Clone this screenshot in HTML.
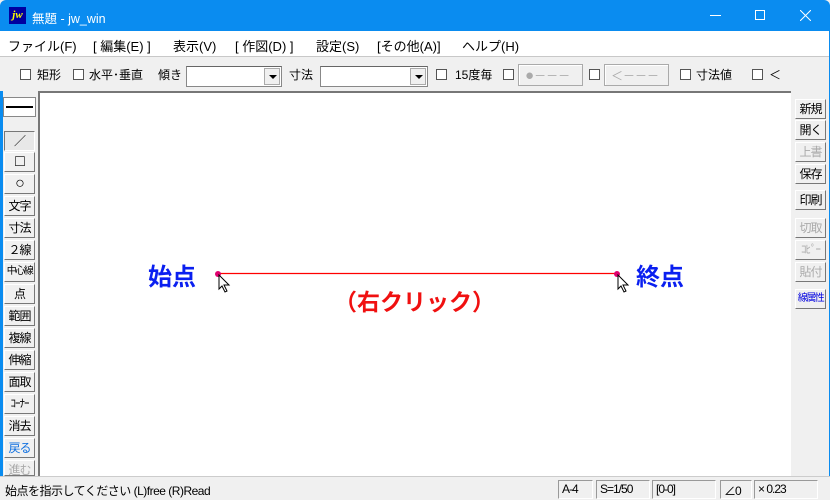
<!DOCTYPE html>
<html><head><meta charset="utf-8"><style>
*{margin:0;padding:0;box-sizing:border-box}
body{width:830px;height:500px;overflow:hidden;background:#f0f0f0;font-family:"Liberation Sans","Noto Sans CJK JP",sans-serif;position:relative;font-size:12px;color:#000}
.a{position:absolute}
#title{left:0;top:0;width:830px;height:31px;background:#0a8cf0;color:#fff;border-radius:6px 6px 0 0}
#menu{left:0;top:31px;width:830px;height:26px;background:#fff;border-bottom:1px solid #c8c8c8;font-size:13px}
#menu span{position:absolute;top:5px}
.cb{position:absolute;width:11px;height:11px;border:1px solid #555;background:#fff;top:69px}
.tl{position:absolute;top:66px;font-size:12px}
.combo{position:absolute;top:66px;height:21px;background:#fff;border:1px solid #888;border-top-color:#666}
.combo i{position:absolute;right:1px;top:1px;width:16px;height:17px;background:#f0f0f0;border:1px solid #aaa}
.combo i:after{content:"";position:absolute;left:4px;top:6px;border:4px solid transparent;border-top:4px solid #000}
.gb{position:absolute;top:64px;height:22px;border:1px solid #aaa;background:#f0f0f0;color:#aaa;font-size:12px;padding:2px 6px;box-shadow:inset 1px 1px #fff}
#canvas{left:38px;top:91px;width:753px;height:385px;background:#fff;border-left:2px solid #777;border-top:2px solid #777}
.lb,.rb{position:absolute;width:31px;height:20px;background:#f0f0f0;border:1px solid #fff;border-right-color:#777;border-bottom-color:#777;font-size:12px;text-align:center;line-height:18px;letter-spacing:-1px;white-space:nowrap;overflow:hidden}
.lb{left:4px}.rb{left:795px}
.dis{color:#aaa}
.sm{font-size:10px;letter-spacing:-1.5px}
#status{left:0;top:476px;width:830px;height:24px;background:#f0f0f0;border-top:1px solid #ccc}
.sp{position:absolute;top:3px;height:19px;border:1px solid #999;border-right-color:#fff;border-bottom-color:#fff;font-size:12px;padding:1px 3px;letter-spacing:-1px}
.big{position:absolute;font-weight:bold;font-size:24px;line-height:28px;white-space:nowrap}
</style></head><body>
<div id="title" class="a">
 <div class="a" style="left:9px;top:7px;width:17px;height:17px;background:#0000a0;color:#ff0;font:italic bold 11px 'Liberation Serif',serif;line-height:16px;text-align:center">jw</div>
 <div class="a" style="left:32px;top:8px;font-size:12.5px">無題 - jw_win</div>
 <div class="a" style="left:710px;top:15px;width:11px;height:1px;background:#fff"></div>
 <div class="a" style="left:755px;top:10px;width:10px;height:10px;border:1px solid #fff"></div>
 <svg class="a" style="left:800px;top:10px" width="11" height="11"><path d="M0 0L11 11M11 0L0 11" stroke="#fff" stroke-width="1"/></svg>
</div>
<div id="menu" class="a">
 <span style="left:8px">ファイル(F)</span><span style="left:93px">[ 編集(E) ]</span><span style="left:173px">表示(V)</span><span style="left:235px">[ 作図(D) ]</span><span style="left:316px">設定(S)</span><span style="left:377px">[その他(A)]</span><span style="left:462px">ヘルプ(H)</span>
</div>
<div class="cb" style="left:20px"></div><div class="tl" style="left:37px">矩形</div>
<div class="cb" style="left:73px"></div><div class="tl" style="left:89px">水平･垂直</div>
<div class="tl" style="left:158px">傾き</div>
<div class="combo" style="left:186px;width:96px"><i></i></div>
<div class="tl" style="left:289px">寸法</div>
<div class="combo" style="left:320px;width:108px"><i></i></div>
<div class="cb" style="left:436px"></div><div class="tl" style="left:455px">15度毎</div>
<div class="cb" style="left:503px"></div>
<div class="gb" style="left:518px;width:65px"><span style="font-size:15px;line-height:14px">●</span>－－－</div>
<div class="cb" style="left:589px"></div>
<div class="gb" style="left:604px;width:65px">＜－－－</div>
<div class="cb" style="left:680px"></div><div class="tl" style="left:696px">寸法値</div>
<div class="cb" style="left:752px"></div><div class="tl" style="left:769px">＜</div>
<div class="a" style="left:0;top:91px;width:3px;height:385px;background:#0a8cf0"></div>
<div class="a" style="left:3px;top:97px;width:33px;height:20px;background:#fff;border:1px solid #888"><div style="margin:8px 2px;height:2px;background:#000"></div></div>
<div id="canvas" class="a">
 <svg class="a" style="left:0;top:0" width="751" height="383"><line x1="178" y1="180.5" x2="576" y2="180.5" stroke="#ff0000" stroke-width="1.3"/></svg>
 <div class="a" style="left:175px;top:178px;width:6px;height:6px;border-radius:50%;background:#e0006e"></div>
 <div class="a" style="left:574px;top:178px;width:6px;height:6px;border-radius:50%;background:#e0006e"></div>
 <div class="big" style="left:108px;top:171px;color:#0a1ff0">始点</div>
 <div class="big" style="left:596px;top:171px;color:#0a1ff0">終点</div>
 <div class="big" style="left:294px;top:195px;color:#f01010;font-size:23px">（右クリック）</div>
 <svg class="a" style="left:178px;top:181px" width="14" height="20"><path d="M1 1 L1 15 L4 12 L7 18 L9 17 L6 11 L11 11 Z" fill="#fff" stroke="#000"/></svg>
 <svg class="a" style="left:577px;top:181px" width="14" height="20"><path d="M1 1 L1 15 L4 12 L7 18 L9 17 L6 11 L11 11 Z" fill="#fff" stroke="#000"/></svg>
</div>
<div class="lb" style="top:131px;background:#e8e8e8;border-color:#777 #fff #fff #777">／</div>
<div class="lb" style="top:152px;font-size:16px">□</div>
<div class="lb" style="top:174px;font-size:16px">○</div>
<div class="lb" style="top:196px">文字</div>
<div class="lb" style="top:218px">寸法</div>
<div class="lb" style="top:240px">２線</div>
<div class="lb sm" style="top:262px">中心線</div>
<div class="lb" style="top:284px">点</div>
<div class="lb" style="top:306px">範囲</div>
<div class="lb" style="top:328px">複線</div>
<div class="lb" style="top:350px">伸縮</div>
<div class="lb" style="top:372px">面取</div>
<div class="lb" style="top:394px;font-size:11px">ｺｰﾅｰ</div>
<div class="lb" style="top:416px">消去</div>
<div class="lb" style="top:438px;color:#1070e0">戻る</div>
<div class="lb dis" style="top:460px;height:16px">進む</div>
<div class="rb" style="top:99px">新規</div>
<div class="rb" style="top:120px">開く</div>
<div class="rb dis" style="top:142px">上書</div>
<div class="rb" style="top:164px">保存</div>
<div class="rb" style="top:190px">印刷</div>
<div class="rb dis" style="top:218px">切取</div>
<div class="rb dis" style="top:240px;font-size:11px">ｺﾋﾟｰ</div>
<div class="rb dis" style="top:262px">貼付</div>
<div class="rb sm" style="top:289px;color:#0000e0">線属性</div>
<div class="a" style="left:829px;top:31px;width:1px;height:469px;background:#0a8cf0"></div>
<div id="status" class="a">
 <div class="a" style="left:5px;top:5px;letter-spacing:-0.5px">始点を指示してください (L)free (R)Read</div>
 <div class="sp" style="left:558px;width:35px">A-4</div>
 <div class="sp" style="left:596px;width:54px">S=1/50</div>
 <div class="sp" style="left:652px;width:64px">[0-0]</div>
 <div class="sp" style="left:720px;width:32px">∠0</div>
 <div class="sp" style="left:754px;width:64px">× 0.23</div>
</div>
</body></html>
